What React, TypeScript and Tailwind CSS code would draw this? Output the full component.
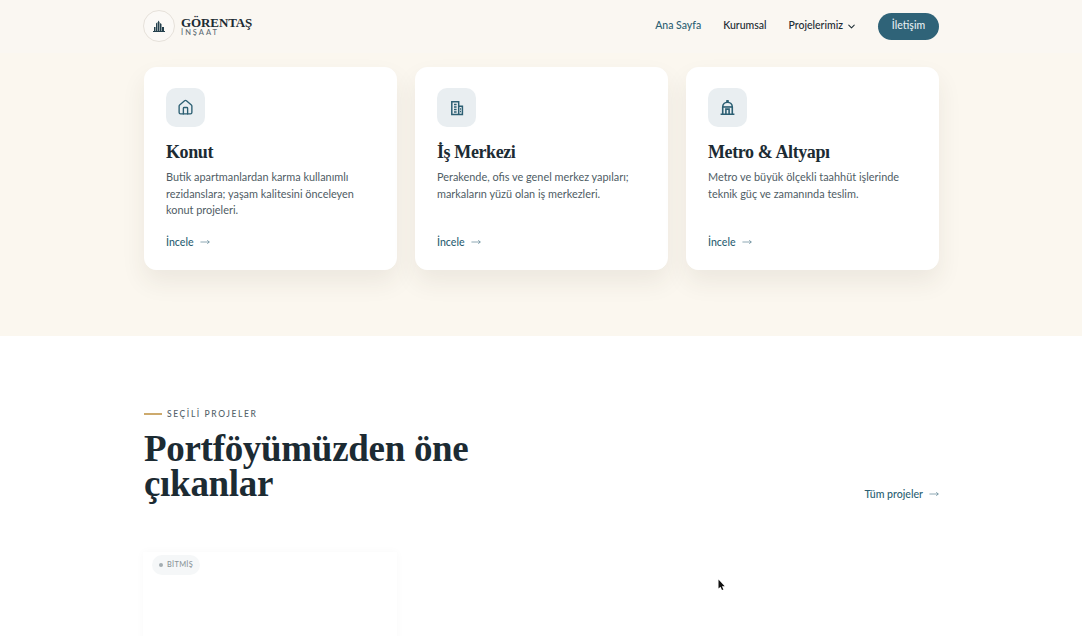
import { House, ChevronDown, MoveRight } from 'lucide-react';

const serif = "font-['Liberation_Serif',serif]";

function Logo() {
  return (
    <div className="flex items-center gap-[6px]">
      <div className="w-[32px] h-[32px] rounded-full border border-[#e6e1da] bg-[#fbf9f6] flex items-center justify-center">
        <svg width="12" height="12" viewBox="0 0 12 12" fill="#24404c">
          <path d="M0 11h12v1H0zM1 7h1.500v4H1zM3 3.500 4.500 2v9H3zM5 0.500l1.500 1.500v9H5zM7 3l1.500 1v7H7zM9 7h2v4H9z" />
        </svg>
      </div>
      <div className="flex flex-col">
        <span className={`${serif} text-[13px] leading-[13px] font-bold text-[#1c2b33] tracking-[-0.1px]`}>GÖRENTAŞ</span>
        <span className="text-[7.500px] leading-[8px] font-medium text-[#5c6b73] tracking-[2px]">İNŞAAT</span>
      </div>
    </div>
  );
}

function TowersIcon() {
  return (
    <svg width="16" height="16" viewBox="0 0 16 16" fill="none" stroke="#2c5f73" strokeWidth="1.500">
      <path d="M2.800 14.500V1.800h6.900v12.700zM9.700 6.200h3.700v8.300H9.700zM2.800 14.500h10.600" />
      <path d="M5 4.500h2.600M5 7h2.600M5 9.500h2.600M5 12h2.600M11 9h1M11 11.500h1" />
    </svg>
  );
}

function DomeIcon() {
  return (
    <svg width="17" height="17" viewBox="0 0 16 16" fill="none" stroke="#2c5f73" strokeWidth="1.500">
      <path d="M1.500 14.300h13M3.500 14V7.500a4.500 4.500 0 0 1 9 0V14M6.500 14V9.500h3V14M8 1v2.500M6.700 2h2.600" />
      <path d="M3.500 7.500h9" />
    </svg>
  );
}

function ArrowLink({ label }: { label: string }) {
  return (
    <a className="flex items-center gap-[6px] text-[10.600px] leading-[16px] font-medium text-[#2c5f73]">
      {label}
      <MoveRight className="w-[10px] h-[10px]" strokeWidth={1.300} />
    </a>
  );
}

function Card({ icon, title, text }: { icon: React.ReactNode; title: string; text: string }) {
  return (
    <div className="bg-white rounded-[12px] border border-white shadow-[0_12px_24px_rgba(60,50,40,0.08)] h-[203px] pt-[20px] pl-[21px] pr-[22px] flex flex-col">
      <div className="w-[39px] h-[39px] rounded-[10px] bg-[#e9eef1] flex items-center justify-center text-[#2c5f73]">
        {icon}
      </div>
      <h3 className={`${serif} mt-[14px] text-[18px] leading-[22px] font-bold tracking-[-0.4px] text-[#1c2b33]`}>{title}</h3>
      <p className="mt-[6px] h-[50px] text-[10.900px] leading-[16.500px] text-[#4f5d65]">{text}</p>
      <div className="mt-[15px]">
        <ArrowLink label="İncele" />
      </div>
    </div>
  );
}

export default function App() {
  return (
    <div className="relative h-[636px] overflow-hidden bg-white font-['Lato',sans-serif]">
      <header className="h-[53px] bg-[#faf7f2] pb-[1px]">
        <div className="w-[796px] mx-auto h-full flex items-center justify-between">
          <Logo />
          <nav className="flex items-center text-[10.500px] font-medium text-[#1c2b33]">
            <a className="text-[#2c5f73]">Ana Sayfa</a>
            <a className="ml-[22px]">Kurumsal</a>
            <a className="ml-[22px] flex items-center gap-[3px]">
              Projelerimiz <ChevronDown className="w-[11px] h-[11px]" strokeWidth={2.200} />
            </a>
            <a className="ml-[21px] w-[61px] h-[27px] rounded-full bg-[#2f6378] text-[#e6eef1] flex items-center justify-center">İletişim</a>
          </nav>
        </div>
      </header>

      <section className="h-[283px] bg-[#fbf7ef] pt-[14px]">
        <div className="w-[794px] mx-auto grid grid-cols-[253px_253px_253px] gap-[18px]">
          <Card
            icon={<House className="w-[17px] h-[17px]" strokeWidth={1.900} />}
            title="Konut"
            text="Butik apartmanlardan karma kullanımlı rezidanslara; yaşam kalitesini önceleyen konut projeleri."
          />
          <Card
            icon={<TowersIcon />}
            title="İş Merkezi"
            text="Perakende, ofis ve genel merkez yapıları; markaların yüzü olan iş merkezleri."
          />
          <Card
            icon={<DomeIcon />}
            title="Metro & Altyapı"
            text="Metro ve büyük ölçekli taahhüt işlerinde teknik güç ve zamanında teslim."
          />
        </div>
      </section>

      <section className="w-[794px] mx-auto pt-[72px]">
        <div className="flex items-center gap-[5px]">
          <span className="w-[18px] h-[2px] bg-[#cdaa6d]" />
          <span className="text-[8.500px] leading-[12px] font-medium tracking-[1.600px] text-[#55636b]">SEÇİLİ PROJELER</span>
        </div>
        <div className="flex items-end justify-between mt-[11px]">
          <h2 className={`${serif} w-[360px] text-[37px] leading-[35px] font-bold tracking-[-0.3px] text-[#1c2b33]`}>
            Portföyümüzden öne çıkanlar
          </h2>
          <div className="-mr-[1px] -mb-[1px]">
            <ArrowLink label="Tüm projeler" />
          </div>
        </div>
        <div className="mt-[51px] -ml-[1px] w-[254px] h-[200px] bg-white shadow-[0_0_8px_rgba(60,50,40,0.03)] pl-[9px] pt-[3px] flex items-start">
          <span className="flex items-center gap-[4px] h-[20px] px-[7px] rounded-full bg-[#f5f7f8] text-[7.400px] font-medium tracking-[0.300px] text-[#8a9499]">
            <span className="w-[4px] h-[4px] rounded-full bg-[#a3adb2]" />
            BİTMİŞ
          </span>
        </div>
      </section>

      <svg className="absolute left-[718px] top-[579px]" width="8" height="12" viewBox="0 0 8 12" fill="#111">
        <path d="M0.500 0.500v9l2-1.800 1.500 3.300 1.400-.6-1.500-3.200h2.800z" />
      </svg>
    </div>
  );
}
